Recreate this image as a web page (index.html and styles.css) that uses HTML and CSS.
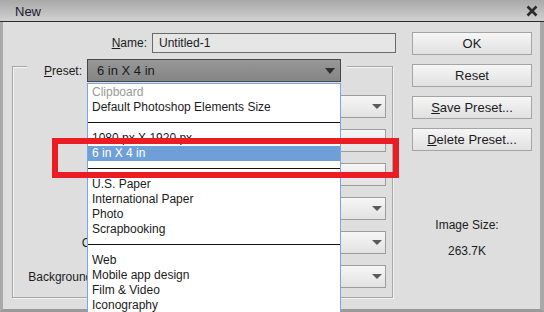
FILE: index.html
```html
<!DOCTYPE html>
<html lang="en">
<head>
  <meta charset="UTF-8" />
  <title>New</title>
  <link rel="stylesheet" href="styles.css">
</head>
<body>

  <div class="dialog">

    <!-- Title bar -->
    <div class="titlebar">
      <span class="title">New</span>
      <svg class="close" width="12" height="12" viewBox="0 0 12 12">
        <path d="M1.5 1.5 L10.5 10.5 M10.5 1.5 L1.5 10.5" stroke="#2b2b2b" stroke-width="2.6" />
      </svg>
    </div>

    <div class="body">

      <!-- Left side: fields -->
      <div class="main">
        <div class="name-row">
          <label class="name-label"><u>N</u>ame:</label>
          <div class="text-input">Untitled-1</div>
        </div>

        <div class="group">
          <div class="preset-row">
            <label class="preset-label"><u>P</u>reset:</label>
            <div class="preset-select">6 in X 4 in<span class="arrow-dark"></span></div>
          </div>

          <!-- rows hidden behind the open list keep only their controls -->
          <div class="field-row">
            <span class="field-label"></span>
            <div class="select"><span class="arrow"></span></div>
          </div>
          <div class="field-row">
            <span class="field-label"></span>
            <div class="select"><span class="arrow"></span></div>
          </div>
          <div class="field-row">
            <span class="field-label"></span>
            <div class="select"><span class="arrow"></span></div>
          </div>
          <div class="field-row">
            <span class="field-label"></span>
            <div class="select"><span class="arrow"></span></div>
          </div>
          <div class="field-row">
            <label class="field-label">Color Mode:</label>
            <div class="select"><span class="arrow"></span></div>
          </div>
          <div class="field-row">
            <label class="field-label">Background Contents:</label>
            <div class="select"><span class="arrow"></span></div>
          </div>
        </div>
      </div>

      <!-- Right side: buttons -->
      <div class="side">
        <button class="btn">OK</button>
        <button class="btn">Reset</button>
        <button class="btn"><u>S</u>ave Preset...</button>
        <button class="btn"><u>D</u>elete Preset...</button>

        <div class="image-size">Image Size:</div>
        <div class="image-size-value">263.7K</div>
      </div>
    </div>

    <!-- Open preset list -->
    <div class="preset-list">
      <div class="item item-muted">Clipboard</div>
      <div class="item">Default Photoshop Elements Size</div>
      <div class="separator"></div>
      <div class="item">1080 px X 1920 px</div>
      <div class="item item-selected">6 in X 4 in</div>
      <div class="separator"></div>
      <div class="item">U.S. Paper</div>
      <div class="item">International Paper</div>
      <div class="item">Photo</div>
      <div class="item">Scrapbooking</div>
      <div class="separator"></div>
      <div class="item">Web</div>
      <div class="item">Mobile app design</div>
      <div class="item">Film &amp; Video</div>
      <div class="item">Iconography</div>
    </div>

    <!-- Red highlight frame -->
    <div class="highlight-frame"></div>
  </div>

</body>
</html>
```

FILE: styles.css
```css
* {
  margin: 0;
  padding: 0;
  box-sizing: border-box;
}

body {
  font-family: "Liberation Sans", Arial, sans-serif;
  font-size: 12px;
  color: #1b1b22;
  background-color: #dedede;
}

.dialog {
  position: relative;
  width: 544px;
  height: 312px;
  overflow: hidden;
  background-color: #dedede;
}

/* Title bar */
.titlebar {
  height: 22px;
  display: flex;
  align-items: center;
  justify-content: space-between;
  padding: 1px 6px 0 15px;
  background: linear-gradient(to bottom, #a9a9a9, #d0d0d0);
  border-bottom: 1px solid #2a2a2a;
}

.title {
  font-size: 13px;
  color: #1a1a30;
}

/* Body */
.body {
  display: flex;
  height: 290px;
  border-left: 3px solid #a9a9a9;
  border-right: 4px solid #a9a9a9;
  border-bottom: 3px solid #9a9a9a;
}

.main {
  width: 397px;
  padding-top: 11px;
}

.name-row {
  display: flex;
  align-items: center;
  gap: 5px;
}

.name-label {
  width: 144px;
  text-align: right;
}

.text-input {
  width: 244px;
  height: 20px;
  line-height: 18px;
  padding-left: 6px;
  background-color: #e6e6e6;
  border: 1px solid #6a6a6a;
}

/* Group box */
.group {
  margin: 13px 0 0 9px;
  width: 381px;
  padding: 0 6px 9px 0;
  border: 1px solid #a6a6a6;
  box-shadow: inset 1px 1px 0 #f4f4f4, 1px 1px 0 #f4f4f4;
}

.preset-row {
  display: flex;
  align-items: center;
  gap: 5px;
  margin: -8px 0 0 14px;
  width: 320px;
  height: 23px;
  background-color: #dedede;
}

.preset-label {
  width: 55px;
  text-align: right;
}

.preset-select {
  position: relative;
  width: 254px;
  height: 23px;
  line-height: 21px;
  padding-left: 9px;
  font-size: 13px;
  background: linear-gradient(to bottom, #979797, #858585);
  border: 1px solid #474747;
}

.arrow-dark {
  position: absolute;
  right: 5px;
  top: 8px;
  border-left: 5px solid transparent;
  border-right: 5px solid transparent;
  border-top: 6px solid #2e2e2e;
}

.field-row {
  display: flex;
  align-items: center;
  gap: 5px;
  margin-top: 11px;
}

.preset-row + .field-row {
  margin-top: 13px;
}

.field-label {
  width: 134px;
  text-align: right;
  white-space: nowrap;
}

.select {
  position: relative;
  flex: 1;
  height: 23px;
  background: linear-gradient(to bottom, #f6f6f6, #e2e2e2);
  border: 1px solid #9c9c9c;
}

.arrow {
  position: absolute;
  right: 3px;
  top: 8px;
  border-left: 5px solid transparent;
  border-right: 5px solid transparent;
  border-top: 5px solid #5a5a5a;
}

/* Buttons column */
.side {
  width: 120px;
  margin-left: 12px;
  padding-top: 10px;
  display: flex;
  flex-direction: column;
}

.btn {
  height: 23px;
  margin-bottom: 9px;
  font-family: inherit;
  font-size: 13px;
  color: #1b1b22;
  background: linear-gradient(to bottom, #f6f6f6, #e0e0e0);
  border: 1px solid #a4a4a4;
}

.image-size {
  margin-top: 58px;
  line-height: 15px;
  text-align: center;
  padding-right: 10px;
}

.image-size-value {
  margin-top: 11px;
  line-height: 15px;
  text-align: center;
  padding-right: 10px;
}

/* Open dropdown list */
.preset-list {
  position: absolute;
  left: 87px;
  top: 83px;
  width: 254px;
  height: 240px;
  padding-top: 1px;
  background-color: #ffffff;
  border: 1px solid #78a6e4;
}

.item {
  height: 15px;
  line-height: 15px;
  padding-left: 4px;
}

.item-muted {
  color: #9a9a9a;
}

.item-selected {
  background-color: #6f9fd9;
  color: #ffffff;
}

.separator {
  height: 1px;
  margin: 7px 0 8px 0;
  background-color: #111111;
}

.highlight-frame {
  position: absolute;
  left: 52px;
  top: 138px;
  width: 347px;
  height: 40px;
  border: 6px solid #ec1c24;
}
```
